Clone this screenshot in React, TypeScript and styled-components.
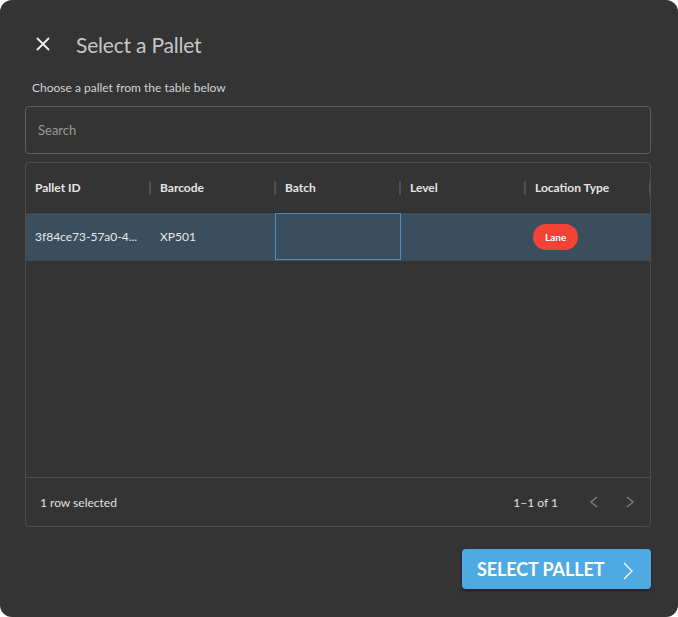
import React from "react";
import styled, { createGlobalStyle } from "styled-components";

const Global = createGlobalStyle`
  html, body { margin: 0; padding: 0; background: #ffffff; }
  body { font-family: "Lato", "Noto Sans", sans-serif; }
  * { box-sizing: border-box; }
`;

const Dialog = styled.div`
  width: 678px;
  height: 617px;
  background: #343434;
  border-radius: 12px;
  display: flex;
  flex-direction: column;
  padding: 0 27px 0 25px;
`;

const TitleRow = styled.div`
  display: flex;
  align-items: center;
  height: 44px;
  margin-top: 22px;
  padding-left: 10px;
`;

const CloseButton = styled.button`
  width: 16px;
  height: 16px;
  padding: 0;
  border: none;
  background: transparent;
  display: flex;
  align-items: center;
  justify-content: center;
  margin-right: 25px;
  cursor: pointer;
`;

const Title = styled.h2`
  margin: 0;
  font-size: 21px;
  font-weight: 400;
  color: #c6c6c6;
  letter-spacing: -0.2px;
`;

const Subtitle = styled.p`
  margin: 14px 0 0 7px;
  font-size: 12px;
  color: #d2d2d2;
  line-height: 16px;
`;

const SearchInput = styled.input`
  margin-top: 10px;
  height: 48px;
  width: 100%;
  background: transparent;
  border: 1px solid #5e5e5e;
  border-radius: 4px;
  padding: 0 12px;
  font-family: inherit;
  font-size: 13px;
  color: #ddd;
  outline: none;
  &::placeholder { color: #9a9a9a; }
`;

const Table = styled.div`
  margin-top: 8px;
  border: 1px solid #4c4c4c;
  border-radius: 4px;
  display: flex;
  flex-direction: column;
  height: 365px;
`;

const Row = styled.div<{ $selected?: boolean; $header?: boolean }>`
  display: grid;
  grid-template-columns: repeat(5, 125px);
  height: ${(p) => (p.$header ? "50px" : "48px")};
  background: ${(p) => (p.$selected ? "#3a4e5d" : "transparent")};
  border-bottom: 1px solid ${(p) => (p.$header ? "#2c2c2c" : "transparent")};
`;

const HeadCell = styled.div`
  display: flex;
  align-items: center;
  padding-left: 9px;
  font-size: 12px;
  font-weight: 700;
  color: #e4e4e4;
`;

const Separator = styled.span`
  margin-left: auto;
  width: 2px;
  height: 14px;
  background: #505050;
`;

const Cell = styled.div<{ $focused?: boolean }>`
  display: flex;
  align-items: center;
  padding-left: 9px;
  font-size: 12px;
  color: #e8e8e8;
  white-space: nowrap;
  overflow: hidden;
  ${(p) => (p.$focused ? "outline: 1px solid #4a8fc4; outline-offset: -1px; margin-left: -1px;" : "")}
`;

const Badge = styled.span`
  display: inline-flex;
  align-items: center;
  justify-content: center;
  height: 26px;
  padding: 0 12px;
  border-radius: 13px;
  background: #f44336;
  color: #fff;
  font-size: 10px;
  font-weight: 700;
  margin-left: -2px;
  margin-top: 1px;
`;

const Body = styled.div`
  flex: 1;
`;

const Footer = styled.div`
  height: 49px;
  border-top: 1px solid #4c4c4c;
  display: flex;
  align-items: center;
  padding: 0 2px 0 14px;
  font-size: 12px;
  color: #e0e0e0;
`;

const FooterRight = styled.div`
  margin-left: auto;
  display: flex;
  align-items: center;
`;

const PageInfo = styled.span`
  margin-right: 18px;
`;

const PageButton = styled.button`
  width: 36px;
  height: 28px;
  border: none;
  background: transparent;
  display: flex;
  align-items: center;
  justify-content: center;
  padding: 0;
`;

const Actions = styled.div`
  display: flex;
  justify-content: flex-end;
  margin-top: 22px;
`;

const PrimaryButton = styled.button`
  width: 189px;
  height: 40px;
  border: none;
  border-radius: 4px;
  background: #4fa9e2;
  box-shadow: 0 2px 3px rgba(0, 0, 0, 0.35);
  color: #fff;
  font-family: inherit;
  font-size: 18px;
  font-weight: 700;
  display: flex;
  align-items: center;
  padding: 0 18px 0 15px;
  letter-spacing: -0.1px;
`;

const ButtonIcon = styled.span`
  margin-left: auto;
  display: flex;
  margin-top: 3px;
`;

const Chevron = ({ dir, color, w = 8, h = 12, sw = 1.5 }: { dir: "left" | "right"; color: string; w?: number; h?: number; sw?: number }) => (
  <svg width={w} height={h} viewBox={`0 0 ${w} ${h}`} fill="none">
    {dir === "right" ? (
      <path d={`M1 1 L${w - 1} ${h / 2} L1 ${h - 1}`} stroke={color} strokeWidth={sw} />
    ) : (
      <path d={`M${w - 1} 1 L1 ${h / 2} L${w - 1} ${h - 1}`} stroke={color} strokeWidth={sw} />
    )}
  </svg>
);

const columns = ["Pallet ID", "Barcode", "Batch", "Level", "Location Type"];

export default function App() {
  return (
    <>
      <Global />
      <Dialog>
        <TitleRow>
          <CloseButton aria-label="close">
            <svg width="14" height="14" viewBox="0 0 14 14">
              <path d="M1 1 L13 13 M13 1 L1 13" stroke="#f0f0f0" strokeWidth="1.8" />
            </svg>
          </CloseButton>
          <Title>Select a Pallet</Title>
        </TitleRow>
        <Subtitle>Choose a pallet from the table below</Subtitle>
        <SearchInput placeholder="Search" />
        <Table>
          <Row $header>
            {columns.map((c) => (
              <HeadCell key={c}>
                {c}
                <Separator />
              </HeadCell>
            ))}
          </Row>
          <Row $selected>
            <Cell>3f84ce73-57a0-4...</Cell>
            <Cell>XP501</Cell>
            <Cell $focused />
            <Cell />
            <Cell>
              <Badge>Lane</Badge>
            </Cell>
          </Row>
          <Body />
          <Footer>
            1 row selected
            <FooterRight>
              <PageInfo>1–1 of 1</PageInfo>
              <PageButton aria-label="previous page">
                <Chevron dir="left" color="#7a7a7a" />
              </PageButton>
              <PageButton aria-label="next page">
                <Chevron dir="right" color="#7a7a7a" />
              </PageButton>
            </FooterRight>
          </Footer>
        </Table>
        <Actions>
          <PrimaryButton>
            SELECT PALLET
            <ButtonIcon>
              <Chevron dir="right" color="#ffffff" w={10} h={18} sw={1.3} />
            </ButtonIcon>
          </PrimaryButton>
        </Actions>
      </Dialog>
    </>
  );
}
